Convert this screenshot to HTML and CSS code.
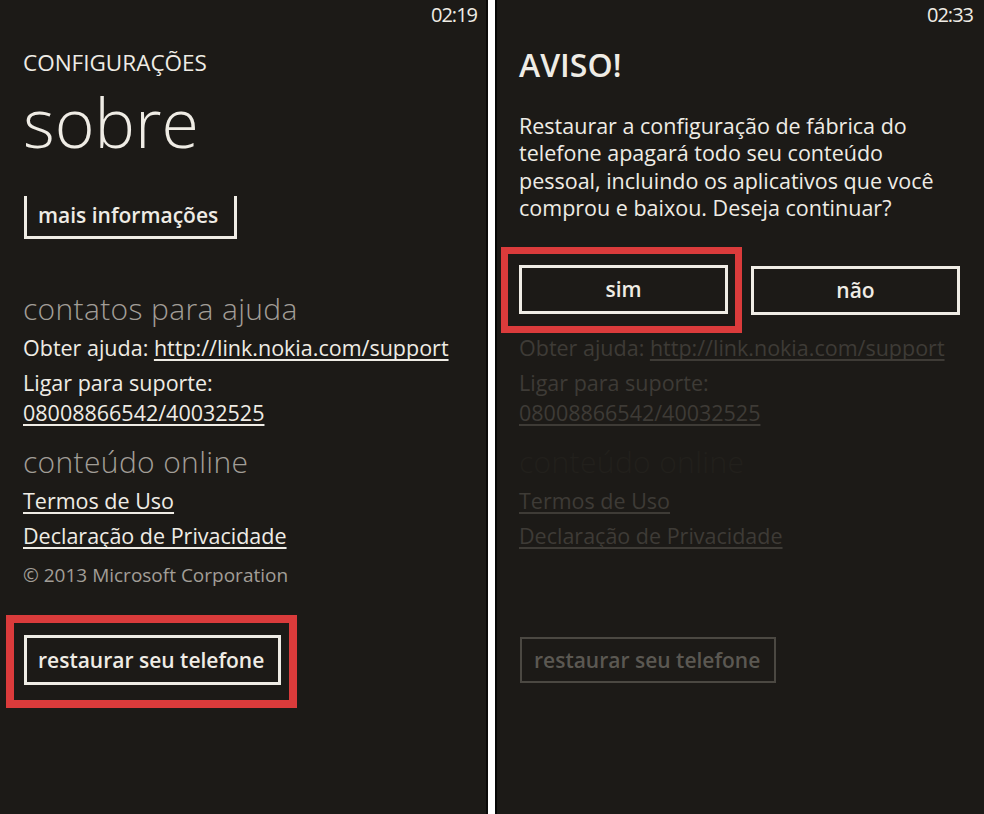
FILE: index.html
```html
<!DOCTYPE html>
<html lang="pt">
<head>
<meta charset="utf-8">
<title>Sobre</title>
<link rel="stylesheet" href="styles.css">
</head>
<body>
<div class="screens">
  <section class="phone left">
    <div class="status"><span class="time">02:19</span></div>
    <div class="app-title">CONFIGURAÇÕES</div>
    <h1 class="page-title">sobre</h1>
    <div class="more-btn">mais informações</div>
    <h2 class="section first">contatos para ajuda</h2>
    <p class="line">Obter ajuda: <span class="link">http://link.nokia.com/support</span></p>
    <p class="line">Ligar para suporte:</p>
    <p class="line cont"><span class="link">08008866542/40032525</span></p>
    <h2 class="section">conteúdo online</h2>
    <p class="line"><span class="link">Termos de Uso</span></p>
    <p class="line"><span class="link">Declaração de Privacidade</span></p>
    <p class="copy">© 2013 Microsoft Corporation</p>
    <div class="highlight hl-restore">
      <div class="btn restore">restaurar seu telefone</div>
    </div>
  </section>
  <section class="phone right">
    <div class="status"><span class="time">02:33</span></div>
    <h1 class="warn-title">AVISO!</h1>
    <p class="warn-text">Restaurar a configuração de fábrica do telefone apagará todo seu conteúdo pessoal, incluindo os aplicativos que você comprou e baixou. Deseja continuar?</p>
    <div class="choices">
      <div class="highlight hl-sim">
        <div class="btn choice">sim</div>
      </div>
      <div class="btn choice">não</div>
    </div>
    <div class="faded">
      <p class="line first">Obter ajuda: <span class="link">http://link.nokia.com/support</span></p>
      <p class="line">Ligar para suporte:</p>
      <p class="line cont"><span class="link">08008866542/40032525</span></p>
      <h2 class="section ghost">conteúdo online</h2>
      <p class="line"><span class="link">Termos de Uso</span></p>
      <p class="line"><span class="link">Declaração de Privacidade</span></p>
      <div class="btn restore dim">restaurar seu telefone</div>
    </div>
  </section>
</div>
</body>
</html>
```

FILE: styles.css
```css
* { box-sizing: border-box; }
html, body { margin: 0; padding: 0; }
body {
  background: #ffffff;
  font-family: "Open Sans", "Noto Sans", sans-serif;
  color: #efece5;
}
.screens {
  display: flex;
  gap: 7px;
  width: 984px;
  height: 814px;
  overflow: hidden;
}
.phone {
  background: #1c1a17;
  height: 814px;
  display: flex;
  flex-direction: column;
  align-items: flex-start;
}
.phone.left {
  width: 488px;
  padding: 0 10px 0 23px;
  border-right: 2px solid #0b0a09;
}
.phone.right {
  flex: 1;
  padding: 0 12px 0 22px;
  border-left: 2px solid #060606;
}
.status {
  align-self: stretch;
  display: flex;
  justify-content: flex-end;
  height: 30px;
  padding-top: 3px;
  margin-right: -1px;
}
.time {
  font-size: 20px;
  line-height: 24px;
  letter-spacing: -1px;
  font-weight: 400;
}
p, h1, h2 { margin: 0; font-weight: 400; }
.app-title {
  margin-top: 20px;
  font-size: 22.5px;
  line-height: 26px;
}
.page-title {
  margin-top: 10px;
  font-size: 68px;
  line-height: 72px;
  font-weight: 300;
}
.more-btn {
  margin-top: 38px;
  margin-left: 1px;
  border: 3px solid #efece5;
  border-top: none;
  padding: 4px 16px 6px 11px;
  font-size: 21px;
  line-height: 30px;
  font-weight: 600;
}
.section {
  margin-top: 16px;
  font-size: 30px;
  line-height: 36px;
  font-weight: 300;
  letter-spacing: 0.35px;
  color: #a29e97;
}
.section.first { margin-top: 52px; }
.line {
  margin-top: 5px;
  font-size: 21.5px;
  line-height: 30px;
}
.section + .line { margin-top: 6px; }
.line.cont { margin-top: 0; }
.line.first { margin-top: 0; }
.link {
  text-decoration: underline;
  text-decoration-thickness: 2px;
  text-underline-offset: 3px;
  text-decoration-skip-ink: none;
}
.copy {
  margin-top: 10px;
  font-size: 19px;
  line-height: 28px;
  color: #a29e97;
}
.highlight {
  border: 8px solid #da3b3b;
}
.hl-restore {
  margin-top: 26px;
  margin-left: -17px;
  padding: 12px 8px 15px 10px;
}
.btn {
  border: 3px solid #efece5;
  font-size: 21px;
  font-weight: 600;
}
.btn.restore {
  line-height: 44px;
  padding: 0 14px 0 11px;
}
.warn-title {
  margin-top: 15px;
  font-size: 32px;
  line-height: 40px;
  font-weight: 600;
}
.warn-text {
  margin-top: 27px;
  width: 445px;
  font-size: 21.5px;
  line-height: 27.3px;
}
.choices {
  display: flex;
  align-items: center;
  gap: 9px;
  margin-top: 26px;
  margin-left: -18px;
}
.hl-sim {
  border-width: 7px;
  padding: 11px 7px 12px 11px;
}
.choice {
  width: 209px;
  text-align: center;
  line-height: 43px;
}
.faded {
  display: flex;
  flex-direction: column;
  align-items: flex-start;
  color: #3e3b36;
}
.section.ghost { color: #22201c; }
.btn.dim {
  margin-top: 86px;
  margin-left: 1px;
  border: 2px solid #4b4842;
  color: #5b5852;
  line-height: 42px;
  padding: 0 14px 0 12px;
}
```
